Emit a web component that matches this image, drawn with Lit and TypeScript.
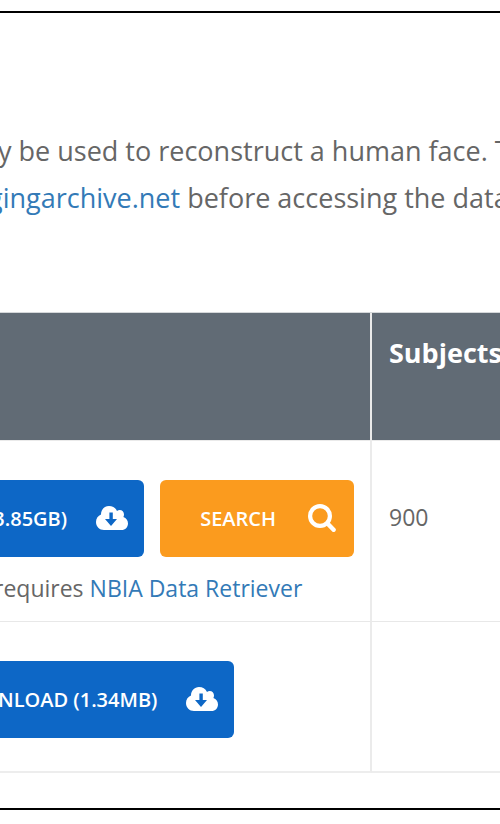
import { LitElement, html, css } from "lit";
import { customElement } from "lit/decorators.js";

const cloudIcon = html`<svg class="icon" width="32" height="24" viewBox="0 0 32 24" aria-hidden="true">
  <path fill="currentColor" fill-rule="evenodd" d="M8 24C3.500 24 0 20.500 0 16C0 12.400 2.100 9.600 5 8.500C4.900 3.700 8.500 0 13 0C16.600 0 19.500 1.900 21 4.900C21.800 4.300 22.700 4 23.700 4C26.200 4 28 6 28 8.500C28 9.400 27.800 10.200 27.400 11C30.200 11.900 32 14.500 32 17.400C32 21.100 29.200 24 25.600 24ZM13.400 6.500V13H9L15 20L21 13H16.800V6.500Z"/>
</svg>`;

const searchIcon = html`<svg class="icon" width="28" height="28" viewBox="0 0 28 28" aria-hidden="true">
  <circle cx="12" cy="12" r="9.900" fill="none" stroke="currentColor" stroke-width="4.200"/>
  <path d="M19.500 19.500L25.600 25.800" fill="none" stroke="currentColor" stroke-width="4.400" stroke-linecap="round"/>
</svg>`;

@customElement("app-root")
export class AppRoot extends LitElement {
  static styles = css`
    :host {
      display: block;
      overflow: hidden;
      background: #fff;
      color: #666;
      font-family: "Open Sans", "Noto Sans", sans-serif;
      font-size: 23px;
    }
    * { box-sizing: border-box; }
    a { color: #337ab7; text-decoration: none; }
    .panel {
      margin: 11px 0 14px;
      padding: 114px 0 35px;
      border: solid #000;
      border-width: 2px 0;
      overflow: hidden;
    }
    .notice {
      margin: 0 0 91px -2px;
      font-size: 27px;
      line-height: 47px;
      white-space: nowrap;
    }
    .line { display: block; }
    .line.cut { margin-left: -10px; }
    table {
      width: 100%;
      table-layout: fixed;
      border-collapse: separate;
      border-spacing: 0;
      border-top: 1px solid #d5d8da;
    }
    th, td { padding: 0; vertical-align: top; text-align: left; border-bottom: 1px solid #eaeaea; }
    th { height: 128px; background: #616b75; color: #fff; font-size: 27px; line-height: 40px; }
    td { border-bottom: 1px solid #e8e8e8; }
    .last td { border-bottom: 2px solid #ededed; }
    .main { border-right: 2px solid #ebebeb; }
    .side { width: 128px; padding: 20px 0 0 17px; white-space: nowrap; }
    td.side { padding-top: 52px; line-height: 48px; }
    .files { padding: 39px 16px 9px 0; }
    .last .files { padding-bottom: 33px; }
    .actions { display: flex; justify-content: flex-end; gap: 16px; }
    .actions.start { justify-content: flex-start; margin-left: -2px; }
    button {
      display: flex;
      align-items: center;
      justify-content: flex-end;
      gap: 29px;
      height: 77px;
      margin: 0;
      padding: 0 16px 0 40px;
      border: 0;
      border-radius: 6px;
      background: #0d67c6;
      color: #fff;
      font: 600 20px/28px "Open Sans", "Noto Sans", sans-serif;
      white-space: nowrap;
    }
    .cropped { padding-left: 0; border-radius: 0 6px 6px 0; }
    .search { gap: 32px; padding-right: 18px; background: #fb9b1e; }
    .icon { flex: none; display: block; margin-bottom: 2px; }
    .note { margin: 7px 0 0 -6px; line-height: 48px; white-space: nowrap; }
  `;

  render() {
    return html`
      <main class="panel">
        <p class="notice">
          <span class="line">y be used to reconstruct a human face. T</span>
          <span class="line cut"><a href="#help">gingarchive.net</a> before accessing the data</span>
        </p>
        <table>
          <thead>
            <tr><th class="main"></th><th class="side" scope="col">Subjects</th></tr>
          </thead>
          <tbody>
            <tr>
              <td class="main files">
                <div class="actions">
                  <button class="cropped" type="button"><span>3.85GB)</span>${cloudIcon}</button>
                  <button class="search" type="button"><span>SEARCH</span>${searchIcon}</button>
                </div>
                <p class="note">requires <a href="#retriever">NBIA Data Retriever</a></p>
              </td>
              <td class="side">900</td>
            </tr>
            <tr class="last">
              <td class="main files">
                <div class="actions start">
                  <button class="cropped" type="button"><span>NLOAD (1.34MB)</span>${cloudIcon}</button>
                </div>
              </td>
              <td class="side"></td>
            </tr>
          </tbody>
        </table>
      </main>
    `;
  }
}
